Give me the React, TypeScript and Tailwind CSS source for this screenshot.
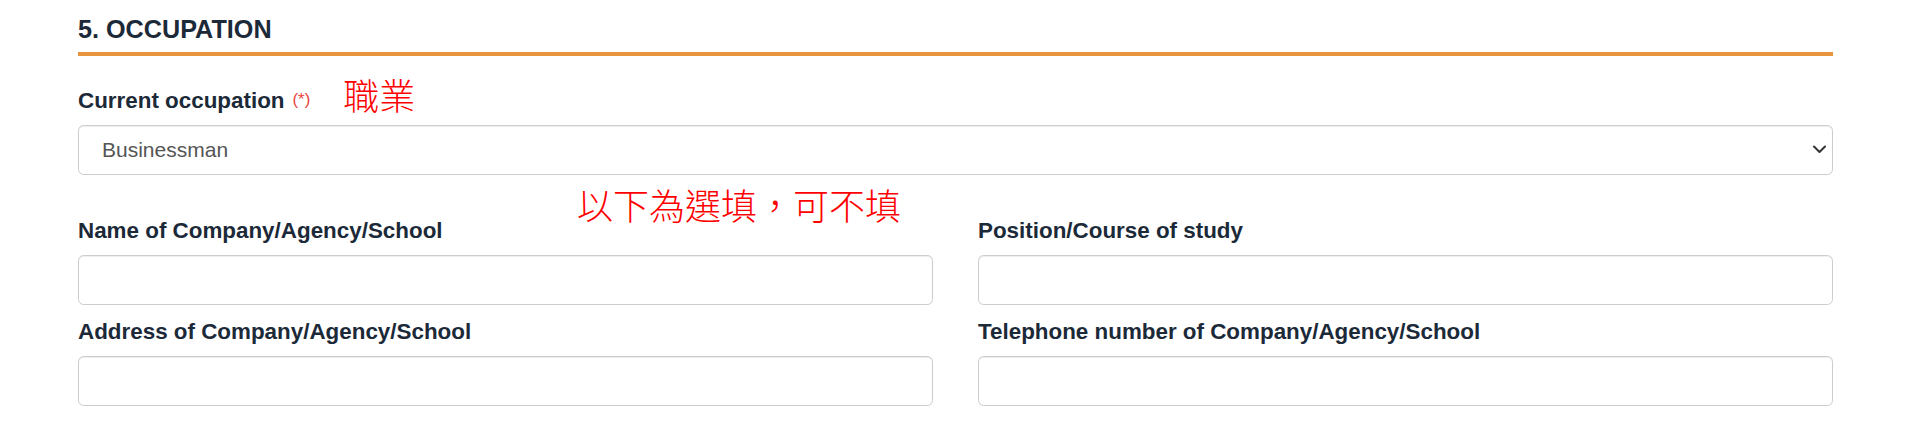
import React from "react";

const sans = "font-['Liberation_Sans',Arial,Helvetica,sans-serif]";
const cjk = "font-['Noto_Sans_CJK_TC','Noto_Sans_CJK_SC',sans-serif]";

function Field({ label }: { label: string }) {
  return (
    <div className="flex flex-col">
      <label className="block text-[22.4px] leading-[32px] font-bold text-[#1b2938]">{label}</label>
      <input
        type="text"
        className="mt-[8px] h-[50px] w-full rounded-[5.6px] border border-[#cccccc] bg-white px-[23px] text-[21px] text-[#555555] shadow-[inset_0_1px_1px_rgba(0,0,0,0.075)] outline-none"
      />
    </div>
  );
}

export default function App() {
  return (
    <div className={`min-h-[438px] w-full bg-white ${sans}`}>
      <div className="relative ml-[78px] w-[1755px] pt-[15px] pb-[33px]">
        <h2 className="text-[25.2px] leading-[29px] font-bold text-[#1b2938]">5. OCCUPATION</h2>
        <div className="mt-[8px] h-[4px] bg-[#e8953f]" />

        <label className="mt-[28.5px] block text-[22.4px] leading-[32px] font-bold text-[#1b2938]">
          Current occupation
          <span className="ml-[8px] align-[3px] text-[16.8px] leading-none font-normal text-[#e8443a]">(*)</span>
          <span className={`ml-[33px] align-[-2px] text-[36px] leading-[0] font-light text-[#ff0000] ${cjk}`}>職業</span>
        </label>

        <div className="relative mt-[8px] h-[50px]">
          <select
            defaultValue="Businessman"
            className="h-[50px] w-full appearance-none rounded-[5.6px] border border-[#cccccc] bg-white pl-[23px] text-[21px] text-[#555555] shadow-[inset_0_1px_1px_rgba(0,0,0,0.075)] outline-none"
          >
            <option>Businessman</option>
          </select>
          <svg
            className="pointer-events-none absolute right-[6px] top-[20px] h-[9px] w-[15px]"
            viewBox="0 0 15 9"
            fill="none"
          >
            <path d="M2 1.5 L7.5 7 L13 1.5" stroke="#333333" strokeWidth="2" strokeLinecap="round" strokeLinejoin="round" />
          </svg>
        </div>

        <span
          className={`absolute left-[499px] top-[186px] text-[36px] leading-none font-light whitespace-nowrap text-[#ff0000] ${cjk}`}
        >
          以下為選填，可不填
        </span>

        <div className="mt-[40px] grid grid-cols-2 gap-x-[45px] gap-y-[11px]">
          <Field label="Name of Company/Agency/School" />
          <Field label="Position/Course of study" />
          <Field label="Address of Company/Agency/School" />
          <Field label="Telephone number of Company/Agency/School" />
        </div>
      </div>
    </div>
  );
}
